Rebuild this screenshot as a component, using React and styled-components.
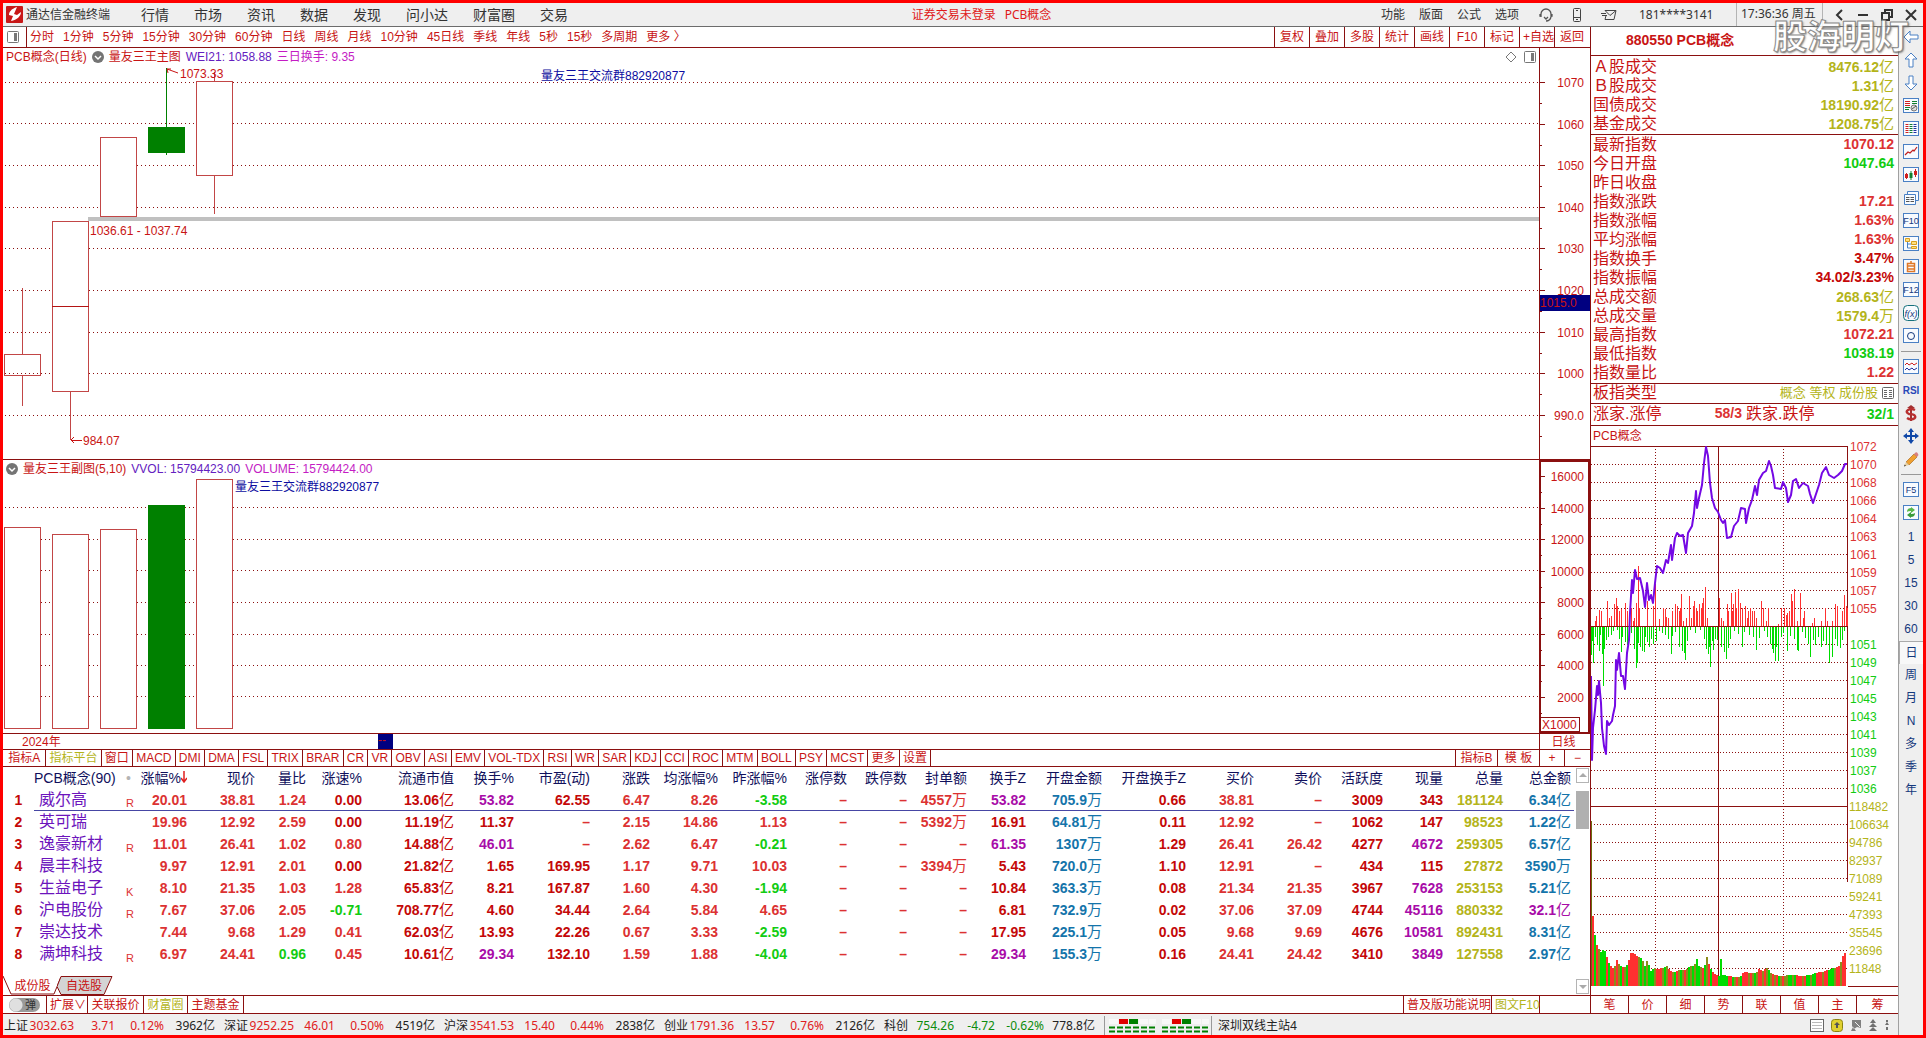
import styled, {createGlobalStyle} from "styled-components";

const line = "#8b1010"
const red = "#c81414"

const colors = {
    r: "#dc3232",
    d: "#c40808",
    g: "#12cc12",
    m: "#a80ca8",
    y: "#b4b41a",
    b: "#1474aa",
}

const GlobalStyle = createGlobalStyle`
  * {
    box-sizing: border-box;
  }

  body {
    margin: 0;
    background: #fff;
    color: ${red};
    font: 12px/16px "Liberation Sans", "Noto Sans CJK SC", sans-serif;
  }

  button {
    margin: 0;
    padding: 0;
    border: 0;
    background: none;
    color: inherit;
    font: inherit;
    white-space: nowrap;
    cursor: pointer;
  }

  svg {
    display: block;
    flex: none;
  }
`

const Frame = styled.div`
  position: relative;
  min-height: 100vh;
  border: 3px solid #f00;
  display: flex;
  flex-direction: column;
`

const TitleBar = styled.header`
  height: 24px;
  padding: 0 6px 0 3px;
  border-bottom: 1px solid #6c6c6c;
  background: #efefef;
  color: #333;
  font-family: "Noto Sans", "Noto Sans CJK SC", sans-serif;
  display: flex;
  align-items: center;
  justify-content: space-between;
`

const Brand = styled.div`
  width: 135px;
  display: flex;
  align-items: center;
  gap: 3px;
`

const Menu = styled.nav`
  display: flex;
  gap: 25px;
  font-size: 14px;
`

const Group = styled.div`
  display: flex;
  align-items: center;
`

const Notice = styled.div`
  padding-left: 14px;
  color: #e01818;
  display: flex;
  gap: 9px;
`

const SmallMenu = styled.nav`
  display: flex;
  gap: 14px;
  margin-right: 20px;
`

const Tools = styled.div`
  display: flex;
  align-items: center;
  gap: 19px;
  margin-right: 22px;
`

const Account = styled.span`
  width: 97px;
`

const Clock = styled.span`
  width: 87px;
  height: 23px;
  line-height: 22px;
  padding-left: 4px;
  border: solid #b4b4b4;
  border-width: 0 1px;
  white-space: nowrap;
`

const WindowButtons = styled.div`
  display: flex;
  align-items: center;
  gap: 12px;
  padding-left: 10px;
`

const Watermark = styled.div`
  position: absolute;
  top: 12px;
  right: 14px;
  font: 700 34px/40px "Noto Sans CJK SC", sans-serif;
  color: #fff;
  opacity: 0.85;
  -webkit-text-stroke: 1px #777;
  text-shadow: 1px 1px 2px #555;
  pointer-events: none;
`

const Body = styled.div`
  flex: 1;
  display: flex;
`

const Workspace = styled.div`
  flex: 1;
  min-width: 0;
  display: flex;
  flex-direction: column;
`

const Columns = styled.div`
  flex: 1;
  display: flex;
`

const Main = styled.main`
  flex: 1;
  min-width: 0;
  border-right: 1px solid ${line};
  display: flex;
  flex-direction: column;
`

const Strip = styled.div`
  height: ${props => props.height}px;
  border-bottom: 1px solid ${line};
  display: flex;
  align-items: stretch;
  justify-content: space-between;
`

const Periods = styled.div`
  display: flex;
  align-items: center;
  gap: 9px;
`

const PanelToggle = styled.button`
  width: 24px;
  height: 20px;
  margin-right: -6px;
  padding-left: 4px;
  border-right: 1px solid ${line};
`

const Tabs = styled.div`
  display: flex;
`

const Actions = styled(Tabs)`
  margin-right: 1px;
`

const IndicatorTabs = styled(Tabs)`
  width: 928px;

  & > * {
    flex-grow: 1;
  }
`

const LinkTabs = styled(Tabs)`
  margin-right: 50px;
  border-left: 1px solid ${line};
`

const Cell = styled.button`
  width: ${props => props.width ? props.width + "px" : "auto"};
  padding: 0 3px;
  border-right: ${props => props.side === "left" ? "0" : `1px solid ${line}`};
  border-left: ${props => props.side === "left" ? `1px solid ${line}` : "0"};
  color: ${props => props.active ? colors.y : "inherit"};
`

const Chart = styled.section`
  display: flex;
  border-bottom: 1px solid ${line};
`

const Canvas = styled.div`
  flex: 1;
  min-width: 0;
`

const Legend = styled.div`
  height: ${props => props.height}px;
  padding: 0 3px;
  display: flex;
  align-items: center;
  gap: 5px;
  white-space: nowrap;
`

const LegendText = styled.span`
  color: ${props => props.color || red};
`

const LegendIcons = styled.div`
  margin-left: auto;
  display: flex;
  gap: 7px;
`

const YearRow = styled(Strip)`
  line-height: 17px;
`

const YearScale = styled.div`
  flex: 1;
  padding-left: 19px;
  display: flex;
`

const Year = styled.span`
  width: 356px;
`

const Cursor = styled.span`
  width: 15px;
  height: 15px;
  background: #000080;
  line-height: 13px;
`

const PeriodName = styled.div`
  width: 51px;
  padding-right: 3px;
  border-left: 1px solid ${line};
  text-align: center;
`

const Quotes = styled.section`
  flex: 1;
  display: flex;
  border-bottom: 1px solid ${line};
`

const QuoteList = styled.div`
  flex: 1;
  min-width: 0;
  display: flex;
  flex-direction: column;
  justify-content: space-between;
`

const Table = styled.table`
  width: 100%;
  table-layout: fixed;
  border-collapse: separate;
  border-spacing: 0;
  font-size: 14px;
  line-height: 20px;
  white-space: nowrap;
`

const Th = styled.th`
  width: ${props => props.width}px;
  height: 22px;
  padding: 0 ${props => props.last ? 3 : 0}px 0 0;
  color: #10105c;
  font-weight: 400;
  text-align: right;
`

const NameTh = styled(Th)`
  padding-right: 24px;
  text-align: center;
`

const DotTh = styled(Th)`
  color: #b4b4b4;
  text-align: left;
`

const Td = styled.td`
  height: 22px;
  padding: 0;
  color: ${props => colors[props.tone]};
  font-weight: 700;
  text-align: right;

  tr:first-child & {
    border-bottom: 1px solid #4646a4;
  }

  &:last-child {
    padding-right: 3px;
  }
`

const RowNumber = styled.td`
  padding: 0;
  color: ${colors.d};
  font-weight: 700;
  text-align: center;
`

const StockName = styled(Td)`
  padding-left: 5px;
  color: #6c14bc;
  font-size: 16px;
  font-weight: 400;
  text-align: left;
`

const Mark = styled(Td)`
  font-size: 11px;
  font-weight: 400;
  line-height: 14px;
  vertical-align: bottom;
  text-align: left;
`

const Unit = styled.span`
  font-size: 15px;
  font-weight: 400;
`

const Sort = styled.svg`
  display: inline-block;
`

const SheetTabs = styled.div`
  display: flex;
  height: 19px;
`

const SheetTab = styled.button`
  position: relative;
  width: 54px;
  height: 19px;
  padding-left: ${props => props.first ? 5 : 0}px;
  line-height: 18px;
`

const TabText = styled.span`
  position: relative;
`

const TabShape = styled.svg`
  position: absolute;
  top: 0;
  left: 0;
`

const ScrollBar = styled.div`
  width: 16px;
  padding: 1px 1px 1px 2px;
  display: flex;
  flex-direction: column;
`

const ScrollButton = styled.button`
  height: 15px;
  border: 1px solid #b4b4b4;
`

const Thumb = styled.div`
  height: 38px;
  margin: 8px 0 auto;
  background: #b0b0b0;
`

const Toggle = styled.label`
  width: 44px;
  padding: 2px 0 0 6px;
  border-right: 1px solid ${line};
`

const ToggleInput = styled.input`
  position: absolute;
  opacity: 0;
`

const ToggleTrack = styled.span`
  display: flex;
  align-items: center;
  justify-content: flex-end;
  width: 31px;
  height: 14px;
  padding-right: 4px;
  border-radius: 7px;
  background: radial-gradient(circle at 7px 7px, #e0e0e0 6px, transparent 7px), #9a9a9a;
  color: #333;
  font-size: 11px;
`

const Aside = styled.aside`
  width: 307px;
  flex: none;
  display: flex;
  flex-direction: column;
`

const AsideTitle = styled.h1`
  height: 29px;
  margin: 0;
  padding-left: 35px;
  border-bottom: 1px solid ${line};
  font-size: 14px;
  line-height: 27px;
`

const Facts = styled.div`
  padding: ${props => props.pad || 0}px 4px 0 2px;
  border-bottom: 1px solid ${line};
`

const Fact = styled.div`
  display: flex;
  align-items: center;
  justify-content: space-between;
  height: ${props => props.height || 19}px;
  padding-bottom: 2px;
  font-size: 16px;
  line-height: 17px;
`

const Value = styled.b`
  color: ${props => colors[props.tone]};
  font-size: 14px;
`

const Tags = styled.span`
  display: flex;
  align-items: center;
  gap: 4px;
  color: ${colors.y};
  font-size: 13px;
`

const Split = styled.span`
  width: 149px;
  margin-right: 4px;
  display: flex;
  justify-content: space-between;
`

const Rest = styled.span`
  flex: 1;
  text-align: right;
`

const AsideCaption = styled.div`
  height: 20px;
  padding-left: 2px;
  line-height: 20px;
`

const DayChartBox = styled.div`
  margin-top: -6px;
`

const AsideTabs = styled.div`
  height: 19px;
  margin-top: auto;
  border: solid ${line};
  border-width: 1px 0;
  display: flex;
`

const AsideTab = styled.button`
  width: 38px;
  border-right: 1px solid ${line};

  &:last-child {
    flex: 1;
    border-right: 0;
  }
`

const StatusBar = styled.footer`
  height: 21px;
  padding: 2px 8px 0 1px;
  background: #efefef;
  color: #222;
  font-family: "Noto Sans", "Noto Sans CJK SC", sans-serif;
  line-height: 19px;
  white-space: nowrap;
  display: flex;
  align-items: center;
`

const Market = styled.div`
  display: grid;
  grid-template-columns: 25px 45px 41px 49px 51px;
  margin-right: 9px;
  text-align: right;
`

const MarketName = styled.span`
  text-align: left;
`

const MarketValue = styled.span`
  color: ${props => props.down ? "#0c8c0c" : "#e02020"};
`

const Divider = styled.div`
  width: 1px;
  height: 19px;
  background: #999;
`

const Blocks = styled.svg`
  margin: 0 2px 0 4px;
`

const Server = styled.div`
  padding-left: 6px;
  border-left: 1px solid #999;
`

const StatusIcons = styled.div`
  margin-left: auto;
  display: flex;
  align-items: center;
  gap: 7px;
`

const Sidebar = styled.nav`
  width: 25px;
  flex: none;
  border-left: 1px solid #a0a0a0;
  background: #efefef;
  color: #14387c;
`

const SideButton = styled.button`
  display: flex;
  justify-content: center;
  width: 24px;
  height: 23px;
  padding-top: ${props => props.text ? 3 : 2}px;
  border: solid #aaa;
  border-width: ${props => props.active ? "1px 0 0 1px" : "0"};
  background: ${props => props.active ? "#f8f8f8" : "none"};
`

const SideLine = styled.div`
  height: 8px;
  padding: 2px 2px 0;

  &::before {
    content: "";
    display: block;
    border-top: 1px solid #999;
  }
`

const menu = ["行情", "市场", "资讯", "数据", "发现", "问小达", "财富圈", "交易"]
const periods = ["分时", "1分钟", "5分钟", "15分钟", "30分钟", "60分钟", "日线", "周线", "月线", "10分钟", "45日线", "季线", "年线", "5秒", "15秒", "多周期", "更多 〉"]
const actions = ["复权", "叠加", "多股", "统计", "画线", "F10", "标记", "+自选", "返回"]
const indicators = ["窗口", "MACD", "DMI", "DMA", "FSL", "TRIX", "BRAR", "CR", "VR", "OBV", "ASI", "EMV", "VOL-TDX", "RSI", "WR", "SAR", "KDJ", "CCI", "ROC", "MTM", "BOLL", "PSY", "MCST", "更多", "设置"]

const columns = [
    ["涨幅%", 50], ["现价", 68], ["量比", 51], ["涨速%", 56], ["流通市值", 92], ["换手%", 60], ["市盈(动)", 76],
    ["涨跌", 60], ["均涨幅%", 68], ["昨涨幅%", 69], ["涨停数", 60], ["跌停数", 60], ["封单额", 60], ["换手Z", 59],
    ["开盘金额", 76], ["开盘换手Z", 84], ["买价", 68], ["卖价", 68], ["活跃度", 61], ["现量", 60], ["总量", 60], ["总金额", 71],
]

// first letter of every value is its tone
const stocks = [
    ["威尔高", "R", "r20.01 r38.81 r1.24 d0.00 d13.06亿 m53.82 d62.55 r6.47 r8.26 g-3.58 r– r– r4557万 m53.82 b705.9万 d0.66 r38.81 r– d3009 d343 y181124 b6.34亿"],
    ["英可瑞", "", "r19.96 r12.92 r2.59 d0.00 d11.19亿 d11.37 r– r2.15 r14.86 r1.13 r– r– r5392万 d16.91 b64.81万 d0.11 r12.92 r– d1062 d147 y98523 b1.22亿"],
    ["逸豪新材", "R", "r11.01 r26.41 r1.02 r0.80 d14.88亿 m46.01 r– r2.62 r6.47 g-0.21 r– r– r– m61.35 b1307万 d1.29 r26.41 r26.42 d4277 m4672 y259305 b6.57亿"],
    ["晨丰科技", "", "r9.97 r12.91 r2.01 d0.00 d21.82亿 d1.65 d169.95 r1.17 r9.71 r10.03 r– r– r3394万 d5.43 b720.0万 d1.10 r12.91 r– d434 d115 y27872 b3590万"],
    ["生益电子", "K", "r8.10 r21.35 r1.03 r1.28 d65.83亿 d8.21 d167.87 r1.60 r4.30 g-1.94 r– r– r– d10.84 b363.3万 d0.08 r21.34 r21.35 d3967 m7628 y253153 b5.21亿"],
    ["沪电股份", "R", "r7.67 r37.06 r2.05 g-0.71 d708.77亿 d4.60 d34.44 r2.64 r5.84 r4.65 r– r– r– d6.81 b732.9万 d0.02 r37.06 r37.09 d4744 m45116 y880332 m32.1亿"],
    ["崇达技术", "", "r7.44 r9.68 r1.29 r0.41 d62.03亿 d13.93 d22.26 r0.67 r3.33 g-2.59 r– r– r– d17.95 b225.1万 d0.05 r9.68 r9.69 d4676 m10581 y892431 b8.31亿"],
    ["满坤科技", "R", "r6.97 r24.41 g0.96 r0.45 d10.61亿 m29.34 d132.10 r1.59 r1.88 g-4.04 r– r– r– m29.34 b155.3万 d0.16 r24.41 r24.42 d3410 m3849 y127558 b2.97亿"],
]

const turnover = [["Ａ股成交", "y8476.12亿"], ["Ｂ股成交", "y1.31亿"], ["国债成交", "y18190.92亿"], ["基金成交", "y1208.75亿"]]

const facts = [
    ["最新指数", "r1070.12"], ["今日开盘", "g1047.64"], ["昨日收盘", "r"], ["指数涨跌", "r17.21"], ["指数涨幅", "r1.63%"],
    ["平均涨幅", "r1.63%"], ["指数换手", "d3.47%"], ["指数振幅", "d34.02/3.23%"], ["总成交额", "y268.63亿"],
    ["总成交量", "y1579.4万"], ["最高指数", "r1072.21"], ["最低指数", "g1038.19"], ["指数量比", "r1.22"],
]

const markets = [
    ["上证", "3032.63", "3.71", "0.12%", "3962亿"],
    ["深证", "9252.25", "46.01", "0.50%", "4519亿"],
    ["沪深", "3541.53", "15.40", "0.44%", "2838亿"],
    ["创业", "1791.36", "13.57", "0.76%", "2126亿"],
    ["科创", "754.26", "-4.72", "-0.62%", "778.8亿"],
]

const Amount = ({children}) => {
    const [, number, unit] = children.match(/^(.*?)([亿万]?)$/)
    return <>{number}{unit && <Unit>{unit}</Unit>}</>
}

const Chevron = () => (
    <svg width="12" height="12" viewBox="0 0 12 12">
        <circle cx="6" cy="6" r="6" fill="#747474"/>
        <path d="M3 5l3 3 3-3" fill="none" stroke="#fff" strokeWidth="1.5"/>
    </svg>
)

const PanelIcon = () => (
    <svg width="12" height="12" viewBox="0 0 12 12">
        <rect x=".5" y=".5" width="11" height="11" rx="1" fill="#fff" stroke="#777"/>
        <path d="M7 2h3v8H7z" fill="#777"/>
    </svg>
)

const Grid = ({levels}) => levels.map(y => (
    <line key={y} x1="2" x2="100%" y1={y + 0.5} y2={y + 0.5} stroke="#8b1010" strokeDasharray="1 3"/>
))

const Candle = ({x, top, height, high, low, down, fill = "#fff"}) => (
    <g stroke={down ? "#008000" : "#c24646"} fill={down ? "#008000" : fill}>
        {high !== undefined && <line x1={x + 18.5} x2={x + 18.5} y1={high} y2={top}/>}
        {low !== undefined && <line x1={x + 18.5} x2={x + 18.5} y1={top + height} y2={low}/>}
        <rect x={x + 0.5} y={top + 0.5} width="36" height={height}/>
    </g>
)

const MainChart = () => (
    <Chart>
        <Canvas>
            <Legend height={18}>
                <LegendText>PCB概念(日线)</LegendText>
                <Chevron/>
                <LegendText>量友三王主图</LegendText>
                <LegendText color="#6420c0">WEI21: 1058.88</LegendText>
                <LegendText color="#c41cc4">三日换手: 9.35</LegendText>
                <LegendIcons>
                    <svg width="12" height="12" viewBox="0 0 12 12">
                        <path d="M6 1l5 5-5 5-5-5z" fill="none" stroke="#777"/>
                    </svg>
                    <PanelIcon/>
                </LegendIcons>
            </Legend>
            <svg width="100%" height="393" shapeRendering="crispEdges">
                <Grid levels={[16, 57, 99, 141, 182, 224, 266, 307, 349]}/>
                <rect x="85" y="151" width="100%" height="4" fill="#c0c0c0"/>
                <Candle x={1} top={288} height={21} high={222} low={340} fill="none"/>
                <Candle x={49} top={155} height={170} low={374}/>
                <rect x="49" y="240" width="37" height="1" fill="#b41414"/>
                <Candle x={97} top={71} height={79}/>
                <Candle x={145} top={61} height={25} high={2} low={89} down/>
                <Candle x={193} top={15} height={94} high={6} low={148}/>
                <g stroke={red} fill="none" shapeRendering="auto">
                    <path d="M164 3l11 4M164 3h4M164 3l1 4M68 374.5h11M68 374l3-3M68 374l3 3"/>
                </g>
                <g fill={red}>
                    <text x="177" y="12">1073.33</text>
                    <text x="87" y="169">1036.61 - 1037.74</text>
                    <text x="80" y="379">984.07</text>
                    <text x="538" y="14" fill="#0c0ca0">量友三王交流群882920877</text>
                </g>
            </svg>
        </Canvas>
        <svg width="51" height="411" shapeRendering="crispEdges">
            <path d="M.5 0v411" stroke={line}/>
            {[1070, 1060, 1050, 1040, 1030, 1020, 1010, 1000, "990.0"].map((label, i) => {
                const y = 34.5 + Math.round(i * 41.6)
                return (
                    <g key={label}>
                        <path d={`M0 ${y}h6M0 ${y + 21}h3`} stroke={line}/>
                        <text x="45" y={y + 4} textAnchor="end" fill={red}>{label}</text>
                    </g>
                )
            })}
            <rect x="1" y="247" width="50" height="16" fill="#000080"/>
            <text x="1" y="259" fill={red}>1015.0</text>
        </svg>
    </Chart>
)

const VolumeChart = () => (
    <Chart>
        <Canvas>
            <Legend height={17}>
                <Chevron/>
                <LegendText>量友三王副图(5,10)</LegendText>
                <LegendText color="#6420c0">VVOL: 15794423.00</LegendText>
                <LegendText color="#c41cc4">VOLUME: 15794424.00</LegendText>
            </Legend>
            <svg width="100%" height="256" shapeRendering="crispEdges">
                <Grid levels={[30, 62, 93, 125, 157, 188, 219]}/>
                <Candle x={1} top={50} height={201}/>
                <Candle x={49} top={57} height={194}/>
                <Candle x={97} top={52} height={199}/>
                <Candle x={145} top={28} height={223} down/>
                <Candle x={193} top={2} height={249}/>
                <text x="232" y="14" fill="#0c0ca0">量友三王交流群882920877</text>
            </svg>
        </Canvas>
        <svg width="51" height="273" shapeRendering="crispEdges">
            <rect x="1" y="1" width="49" height="272" fill="none" stroke={line} strokeWidth="2"/>
            {[16000, 14000, 12000, 10000, 8000, 6000, 4000, 2000].map((label, i) => {
                const y = 16.5 + Math.round(i * 31.5)
                return (
                    <g key={label}>
                        <path d={`M0 ${y}h6M0 ${y + 16}h3`} stroke={line}/>
                        <text x="45" y={y + 4} textAnchor="end" fill={red}>{label}</text>
                    </g>
                )
            })}
            <rect x="1.5" y="257.5" width="39" height="14" fill="#fff" stroke={line}/>
            <text x="3" y="269" fill={red}>X1000</text>
        </svg>
    </Chart>
)

const price = [
    0, 230, 1, 314, 2, 282, 4, 264, 6, 240, 7, 249, 8, 235, 10, 257, 11, 282, 13, 300, 15, 308, 16, 275, 18, 279, 21, 275,
    22, 269, 24, 260, 25, 214, 26, 224, 28, 207, 30, 230, 32, 230, 34, 243, 36, 207, 38, 194, 39, 167, 41, 134, 42, 147,
    44, 124, 46, 133, 49, 132, 52, 145, 54, 161, 56, 137, 58, 154, 60, 149, 62, 157, 64, 137, 66, 120, 69, 122, 72, 127,
    75, 114, 77, 117, 80, 99, 81, 114, 84, 92, 86, 87, 89, 90, 92, 89, 95, 107, 97, 87, 101, 80, 103, 67, 105, 45, 106, 62,
    108, 52, 111, 39, 113, 17, 115, 1, 117, 10, 119, 37, 121, 52, 124, 62, 127, 66, 130, 74, 132, 77, 134, 74, 136, 92,
    140, 91, 143, 80, 147, 75, 150, 62, 154, 63, 155, 77, 158, 62, 161, 54, 164, 40, 166, 49, 168, 34, 172, 27, 175, 25,
    178, 15, 180, 20, 182, 29, 184, 42, 190, 43, 192, 36, 195, 42, 197, 56, 200, 49, 202, 35, 205, 33, 208, 42, 212, 37,
    217, 40, 219, 48, 222, 57, 224, 51, 228, 39, 231, 27, 235, 21, 238, 29, 243, 32, 247, 29, 251, 25, 254, 18, 256, 18,
]

// x, height pairs above and below the zero line
const rises = [
    4, 5, 5, 10, 8, 16, 10, 15, 16, 25, 18, 8, 20, 10, 23, 22, 25, 28, 26, 20, 28, 15, 30, 17, 34, 23, 36, 15, 40, 18, 42, 5,
    43, 8, 45, 23, 47, 60, 48, 18, 56, 25, 62, 20, 64, 42, 68, 7, 72, 18, 74, 17, 75, 9, 77, 8, 81, 15, 84, 22, 86, 20, 88, 15,
    89, 18, 90, 32, 92, 5, 95, 8, 98, 30, 100, 8, 102, 20, 103, 25, 105, 18, 106, 15, 108, 22, 110, 18, 111, 23, 112, 28,
    114, 39, 116, 8, 128, 28, 130, 8, 132, 5, 136, 22, 137, 15, 140, 33, 141, 15, 142, 22, 144, 34, 145, 18, 147, 37, 149, 23,
    151, 18, 154, 20, 156, 8, 157, 15, 159, 18, 161, 15, 163, 15, 165, 8, 170, 25, 172, 18, 175, 5, 177, 18, 187, 2, 190, 18,
    193, 18, 195, 11, 196, 13, 198, 15, 200, 32, 201, 25, 203, 37, 206, 5, 209, 33, 212, 8, 213, 15, 221, 3, 223, 8, 230, 5,
    234, 18, 236, 5, 241, 5, 244, 22, 246, 20, 251, 15, 253, 31, 255, 20, 256, 18,
]
const falls = [
    0, 28, 1, 14, 2, 36, 4, 10, 6, 18, 8, 24, 9, 8, 11, 27, 12, 59, 13, 22, 15, 13, 17, 10, 20, 8, 22, 4, 26, 3, 28, 12, 30, 25,
    31, 10, 34, 15, 36, 18, 40, 6, 43, 22, 45, 41, 46, 36, 47, 16, 49, 20, 51, 24, 53, 25, 54, 10, 56, 15, 58, 20, 60, 12,
    62, 17, 65, 14, 68, 4, 71, 6, 74, 8, 77, 12, 80, 27, 81, 9, 84, 5, 88, 20, 91, 24, 93, 26, 94, 33, 96, 14, 99, 3, 104, 6,
    109, 3, 113, 12, 115, 22, 117, 27, 118, 20, 119, 40, 121, 14, 122, 23, 124, 12, 126, 13, 130, 20, 133, 25, 135, 32,
    137, 21, 139, 12, 143, 4, 147, 7, 151, 20, 153, 5, 158, 8, 162, 10, 165, 23, 168, 11, 173, 4, 176, 10, 179, 17, 181, 22,
    182, 26, 184, 34, 185, 20, 187, 34, 190, 10, 192, 6, 196, 24, 199, 9, 203, 12, 206, 23, 207, 24, 211, 5, 214, 11, 217, 17,
    219, 30, 222, 13, 224, 18, 227, 10, 230, 20, 232, 14, 235, 18, 238, 36, 241, 30, 244, 12, 246, 19, 249, 21, 251, 13, 253, 4,
]
const volume = [
    1, 70, 2, 60, 4, 42, 6, 40, 8, 34, 10, 34, 12, 38, 14, 32, 16, 25, 19, 20, 22, 17, 25, 26, 28, 20, 32, 18, 36, 22, 39, 33,
    42, 33, 45, 30, 50, 27, 53, 20, 56, 28, 58, 14, 62, 18, 66, 17, 70, 18, 75, 20, 78, 15, 82, 13, 88, 16, 94, 16, 98, 20,
    101, 20, 103, 22, 104, 33, 106, 20, 112, 17, 115, 29, 118, 18, 122, 13, 126, 10, 128, 10, 129, 27, 131, 11, 142, 9, 148, 9,
    152, 14, 158, 13, 164, 13, 167, 17, 172, 15, 174, 19, 180, 12, 188, 10, 202, 11, 210, 10, 218, 11, 224, 13, 230, 14,
    236, 16, 242, 18, 247, 20, 250, 26, 252, 33, 255, 33,
]
const volumeTones = "rgrogggrgrrorogrogrrrrrogogogggorrrogorrogrogorogogoggorgorgrrrgggggrrgorogrrrorogorrorogororgorooggogrrrorggoggrrrorrgggorrorr"
const volumeColors = {r: "#ff3030", g: "#00dc00", o: "#8c8c1c"}

const pairs = list => Array.from({length: list.length / 2}, (_, i) => [list[i * 2], list[i * 2 + 1]])

const volumeAt = x => {
    const points = pairs(volume)
    const next = points.findIndex(point => point[0] >= x)
    if (next < 1) return points[0][1]
    const [x1, y1] = points[next - 1]
    const [x2, y2] = points[next]
    return Math.round(y1 + (y2 - y1) * (x - x1) / (x2 - x1))
}

const scale = [
    1072, 1070, 1068, 1066, 1064, 1063, 1061, 1059, 1057, 1055, "", 1051, 1049, 1047, 1045, 1043, 1041, 1039, 1037, 1036,
    118482, 106634, 94786, 82937, 71089, 59241, 47393, 35545, 23696, 11848,
]

const scaleColor = i => i < 10 ? colors.r : i < 20 ? colors.g : colors.y

const DayChart = () => (
    <svg width="307" height="549" shapeRendering="crispEdges">
        {scale.map((label, i) => {
            const y = 6.5 + i * 18
            return (
                <g key={i}>
                    <path d={`M0 ${y}h256`} stroke={line} strokeDasharray={i % 10 ? "1 2" : "none"}/>
                    <text x={i < 20 ? 259 : 258} y={y + 4} fill={scaleColor(i)}>{label}</text>
                </g>
            )
        })}
        <path d="M64.5 6v540M192.5 6v540" stroke={line} strokeDasharray="1 2"/>
        <path d="M256.5 6v436M257 546.5h50" stroke={line}/>
        {pairs(rises).map(([x, h]) => <rect key={x} x={x} y={186 - h} width="1" height={h} fill="#ff3030"/>)}
        {pairs(falls).map(([x, h]) => <rect key={x} x={x} y="187" width="1" height={h} fill="#00dc00"/>)}
        {volumeTones.split("").map((tone, i) => {
            const h = volumeAt(i * 2 + 1)
            return <rect key={i} x={i * 2 + 1} y={546 - h} width="2" height={h} fill={volumeColors[tone]}/>
        })}
        <rect x="0" y="381" width="1" height="165" fill="#6c6c10"/>
        <path d="M127.5 6v530" stroke={line}/>
        <polyline points={pairs(price).map(([x, y]) => `${x},${y + 6}`).join(" ")} fill="none" stroke="#7408e4"
                  strokeWidth="2" strokeLinejoin="round" shapeRendering="auto"/>
    </svg>
)

const Box = ({children}) => (
    <svg width="16" height="16" viewBox="0 0 16 16">
        <rect x=".5" y=".5" width="15" height="14" fill="#f8fbff" stroke="#4a80c4"/>
        {children}
    </svg>
)

const BoxText = ({children}) => (
    <Box><text x="8" y="11" fontSize="9" textAnchor="middle" fill="#14387c">{children}</text></Box>
)

const Arrow = ({angle}) => (
    <svg width="16" height="16" viewBox="0 0 16 16">
        <path d="M1 8l6-6v4h8v4H7v4z" transform={`rotate(${angle} 8 8)`} fill="#fff" stroke="#4a80c4" strokeLinejoin="round"/>
    </svg>
)

const sideTools = [
    ["后退", <Arrow angle={0}/>],
    ["上移", <Arrow angle={90}/>],
    ["下移", <Arrow angle={270}/>],
    ["报价", <Box>
        <path d="M2 3.500h5M2 5.500h5M2 7.500h5" stroke="#d02020"/>
        <path d="M9 3.500h5M9 5.500h5M2 9.500h5M2 11.500h4" stroke="#108030"/>
        <circle cx="11" cy="10" r="3" fill="#ddd" stroke="#777"/>
        <path d="M9 11l4-3" stroke="#555"/>
    </Box>],
    ["列表", <Box>
        <path d="M4 3v10" stroke="#d02020" strokeWidth="3" strokeDasharray="1 1"/>
        <path d="M8 3v10" stroke="#108030" strokeWidth="3" strokeDasharray="1 1"/>
        <path d="M12 3v10" stroke="#2030a0" strokeWidth="3" strokeDasharray="1 1"/>
    </Box>],
    ["走势", <Box><path d="M2 11l3-3 2 1 3-3 1 1 3-4" fill="none" stroke="#c02020" strokeWidth="1.2"/></Box>],
    ["K线", <Box>
        <path d="M3.500 6v6M12.500 2v8" stroke="#d02020"/>
        <path d="M2 7h3v4H2zM11 4h3v4h-3z" fill="#d02020"/>
        <path d="M8 4v9" stroke="#108030"/>
        <path d="M6.500 6h3v5h-3z" fill="#108030"/>
    </Box>],
    ["窗口", <svg width="16" height="16" viewBox="0 0 16 16">
        <path d="M4.500 4V1.500h11v9H13M1.500 4.500h11v10h-11z" fill="#f8fbff" stroke="#4a80c4"/>
        <path d="M3 7.500h8M3 9.500h8M3 11.500h8" stroke="#555" strokeDasharray="3.500 1"/>
    </svg>],
    ["基本资料", <BoxText>F10</BoxText>],
    ["板块树", <Box>
        <path d="M4.500 6v6h4M4.500 8h4" fill="none" stroke="#4a80c4"/>
        <path d="M2.500 2.500h4v3h-4zM8.500 5.500h5v3h-5zM8.500 10.500h5v2h-5z" fill="#ffe080" stroke="#d8a020"/>
    </Box>],
    ["自选", <Box>
        <path d="M4.500 4.500h7v8h-7zM4.500 7h7M4.500 10h7M8 2v2" fill="none" stroke="#e07828" strokeWidth="1.500"/>
    </Box>],
    ["资金", <BoxText>F12</BoxText>],
    ["公式", <svg width="16" height="16" viewBox="0 0 16 16">
        <rect x=".5" y=".5" width="15" height="15" rx="4" fill="#f8fbff" stroke="#14707c"/>
        <text x="8" y="12" fontSize="9" fontStyle="italic" textAnchor="middle" fill="#14387c">f(x)</text>
    </svg>],
    ["周期", <Box><circle cx="8" cy="8" r="3.500" fill="none" stroke="#14387c"/></Box>],
    null,
    ["对比", <Box>
        <path d="M2 6l2-2 2 2 3-2 2 2 3-2" fill="none" stroke="#d02020"/>
        <path d="M2 11l2-2 2 2 3-2 2 2 3-2" fill="none" stroke="#2030a0"/>
    </Box>],
    ["指标", <svg width="20" height="16" viewBox="0 0 20 16">
        <text x="10" y="12" fontSize="10" fontWeight="700" textAnchor="middle" fill="#2848b8">RSI</text>
    </svg>],
    ["委托", <svg width="16" height="16" viewBox="0 0 16 16">
        <path d="M8 0l4 3H4zM7 2h2v14H7z" fill="#a03030"/>
        <path d="M12 5Q8 3 5 5t1 4q5 0 6 2t-2 3-6-1" fill="none" stroke="#b83030" strokeWidth="2.400"/>
    </svg>],
    ["移动", <svg width="16" height="16" viewBox="0 0 16 16">
        <path d="M8 0l3 4H9v3h3V5l4 3-4 3V9H9v3h2l-3 4-3-4h2V9H4v2L0 8l4-3v2h3V4H5z" fill="#1048a8"/>
    </svg>],
    ["画笔", <svg width="16" height="16" viewBox="0 0 16 16">
        <path d="M3 11l8-8 3 3-8 8z" fill="#f0a030" stroke="#a06010" strokeWidth=".6"/>
        <path d="M11 3l1.500-1.500q1.500-.5 2 .5t1 2L14 6z" fill="#d88080"/>
        <path d="M3 11l3 3-5 1.500z" fill="#e8d0a0"/>
        <path d="M1 15.500l2-.7-1.300-1.300z" fill="#333"/>
    </svg>],
    null,
    ["分时", <BoxText>F5</BoxText>],
    ["刷新", <Box>
        <path d="M4 7q0-4 4-4V2l4 3-4 3V6q-3 0-4 1z" fill="#58b848"/>
        <path d="M12 8q0 4-4 4v1l-4-3 4-3v2q3 0 4-1z" fill="#3c9c3c"/>
    </Box>],
]

const sidePeriods = ["1", "5", "15", "30", "60", "日", "周", "月", "N", "多", "季", "年"]

const Header = () => (
    <TitleBar>
        <Group>
            <Brand>
                <svg width="17" height="17" viewBox="0 0 17 17">
                    <rect width="17" height="17" rx="1" fill="#c81818"/>
                    <path d="M11 1C5 3 3 6 3 9l4 1-2 5c6-1 10-5 10-9l-4 3-3-1z" fill="#fff"/>
                </svg>
                通达信金融终端
            </Brand>
            <Menu>{menu.map(item => <button key={item}>{item}</button>)}</Menu>
        </Group>
        <Notice><span>证券交易未登录</span><span>PCB概念</span></Notice>
        <Group>
            <SmallMenu>{["功能", "版面", "公式", "选项"].map(item => <button key={item}>{item}</button>)}</SmallMenu>
            <Tools>
                <svg width="14" height="14" viewBox="0 0 14 14" fill="none" stroke="#555" strokeWidth="1.3">
                    <path d="M2 9V6a5 5 0 0 1 10 0v3M1 6v2h1M13 6v2h-1M12 9q-1 4-5 4M5 9l2 2 2-2"/>
                </svg>
                <svg width="10" height="14" viewBox="0 0 10 14" fill="none" stroke="#444">
                    <rect x="1.5" y=".5" width="7" height="13" rx="1"/>
                    <path d="M1.500 9.500h7M4 11.500h2M4 2.500h2"/>
                </svg>
                <svg width="16" height="12" viewBox="0 0 16 12" fill="none" stroke="#444">
                    <path d="M4 1.500h11l-2 9H4l1-4M4 1.500l5 5 6-5M0 4.500h5M1 6.500h5"/>
                </svg>
            </Tools>
            <Account>181****3141</Account>
            <Clock>17:36:36 周五</Clock>
            <WindowButtons>
                <button aria-label="返回">
                    <svg width="12" height="12" fill="none" stroke="#333" strokeWidth="2"><path d="M9 1L4 6l5 5"/></svg>
                </button>
                <button aria-label="最小化">
                    <svg width="12" height="12" stroke="#333" strokeWidth="2"><path d="M1 6h10"/></svg>
                </button>
                <button aria-label="还原">
                    <svg width="12" height="12" fill="none" stroke="#333" strokeWidth="2">
                        <path d="M4 4V1h7v7H8M1 4h7v7H1z"/>
                    </svg>
                </button>
                <button aria-label="关闭">
                    <svg width="12" height="12" stroke="#333" strokeWidth="2"><path d="M1 1l10 10M11 1L1 11"/></svg>
                </button>
            </WindowButtons>
        </Group>
    </TitleBar>
)

const SortArrow = () => (
    <Sort width="6" height="12" viewBox="0 0 6 12">
        <path d="M3 0v11M0 7l3 4 3-4" fill="none" stroke="#e02020" strokeWidth="1.5"/>
    </Sort>
)

const QuoteTable = () => (
    <Table>
        <thead>
        <tr>
            <Th width={31}/>
            <NameTh width={92}>PCB概念(90)</NameTh>
            <DotTh width={11}>•</DotTh>
            {columns.map(([name, width], i) => (
                <Th key={name} width={width} last={i === columns.length - 1 ? 1 : undefined}>
                    {name}
                    {i === 0 && <SortArrow/>}
                </Th>
            ))}
        </tr>
        </thead>
        <tbody>
        {stocks.map(([name, mark, values], i) => (
            <tr key={name}>
                <RowNumber>{i + 1}</RowNumber>
                <StockName>{name}</StockName>
                <Mark tone="r">{mark}</Mark>
                {values.split(" ").map((value, j) => (
                    <Td key={j} tone={value[0]}><Amount>{value.slice(1)}</Amount></Td>
                ))}
            </tr>
        ))}
        </tbody>
    </Table>
)

const Heat = ({hot}) => (
    <Blocks width="47" height="15">
        {[0, 1, 2, 3, 4].map(i => (
            <rect key={i} x={i * 10} y="1" width="9" height="5"
                  fill={i === hot ? "#e00000" : i === hot + 1 ? "#008000" : "#f8f8f8"}/>
        ))}
        <path d="M0 9.500h47M0 13.500h47" stroke="#008000" strokeWidth="2" strokeDasharray="6 2"/>
    </Blocks>
)

const FactRows = ({rows}) => rows.map(([name, value]) => (
    <Fact key={name}>
        {name}<Value tone={value[0]}><Amount>{value.slice(1)}</Amount></Value>
    </Fact>
))

const MainPanel = () => (
    <Main>
        <Strip height={21}>
            <Periods>
                <PanelToggle aria-label="侧栏"><PanelIcon/></PanelToggle>
                {periods.map(item => <button key={item}>{item}</button>)}
            </Periods>
            <Actions>
                {actions.map(item => <Cell key={item} width={35} side="left">{item}</Cell>)}
            </Actions>
        </Strip>
        <MainChart/>
        <VolumeChart/>
        <YearRow height={16}>
            <YearScale>
                <Year>2024年</Year>
                <Cursor>--</Cursor>
            </YearScale>
            <PeriodName>日线</PeriodName>
        </YearRow>
        <Strip height={17}>
            <IndicatorTabs>
                <Cell width={43}>指标A</Cell>
                <Cell active={1}>指标平台</Cell>
                {indicators.map(item => <Cell key={item}>{item}</Cell>)}
            </IndicatorTabs>
            <Tabs>
                <Cell side="left" width={42}>指标B</Cell>
                <Cell side="left" width={42}>模 板</Cell>
                <Cell side="left" width={25}>+</Cell>
                <Cell side="left" width={26}>−</Cell>
            </Tabs>
        </Strip>
        <Quotes>
            <QuoteList>
                <QuoteTable/>
                <SheetTabs>
                    <SheetTab first={1}>
                        <TabShape width="60" height="19">
                            <path d="M0 0l8 18h43l7-17" fill="#fff" stroke={line}/>
                        </TabShape>
                        <TabText>成份股</TabText>
                    </SheetTab>
                    <SheetTab>
                        <TabShape width="56" height="19">
                            <path d="M4 .5h51l-8 18H4l-4-8z" fill="#d4d4d4" stroke={line}/>
                        </TabShape>
                        <TabText>自选股</TabText>
                    </SheetTab>
                </SheetTabs>
            </QuoteList>
            <ScrollBar>
                <ScrollButton aria-label="向上">
                    <svg width="11" height="13"><path d="M2 8l4-4 4 4z" fill="#aaa"/></svg>
                </ScrollButton>
                <Thumb/>
                <ScrollButton aria-label="向下">
                    <svg width="11" height="13"><path d="M2 5l4 4 4-4z" fill="#aaa"/></svg>
                </ScrollButton>
            </ScrollBar>
        </Quotes>
        <Strip height={18}>
            <Tabs>
                <Toggle>
                    <ToggleInput type="checkbox"/>
                    <ToggleTrack>弹</ToggleTrack>
                </Toggle>
                <Cell width={41}>扩展∨</Cell>
                <Cell width={56}>关联报价</Cell>
                <Cell width={44} active={1}>财富圈</Cell>
                <Cell width={56}>主题基金</Cell>
            </Tabs>
            <LinkTabs>
                <Cell width={88}>普及版功能说明</Cell>
                <Cell width={48} active={1}>图文F10</Cell>
            </LinkTabs>
        </Strip>
    </Main>
)

const InfoPanel = () => (
    <Aside>
        <AsideTitle>880550 PCB概念</AsideTitle>
        <Facts pad={2}><FactRows rows={turnover}/></Facts>
        <Facts pad={1}><FactRows rows={facts}/></Facts>
        <Facts>
            <Fact>
                板指类型
                <Tags>
                    概念 等权 成份股
                    <svg width="12" height="12" viewBox="0 0 12 12">
                        <rect x=".5" y=".5" width="11" height="11" rx="1" fill="#fff" stroke="#666"/>
                        <path d="M2 3.500h8M2 5.500h8M2 7.500h8M2 9.500h8" stroke="#666" strokeDasharray="3 2"/>
                    </svg>
                </Tags>
            </Fact>
        </Facts>
        <Facts>
            <Fact height={21}>
                <Split>涨家.涨停<Value tone="r">58/3</Value></Split>
                <span>跌家.跌停</span>
                <Rest><Value tone="g">32/1</Value></Rest>
            </Fact>
        </Facts>
        <AsideCaption>PCB概念</AsideCaption>
        <DayChartBox><DayChart/></DayChartBox>
        <AsideTabs>
            {["笔", "价", "细", "势", "联", "值", "主", "筹"].map(item => (
                <AsideTab key={item}>{item}</AsideTab>
            ))}
        </AsideTabs>
    </Aside>
)

const Status = () => (
    <StatusBar>
        {markets.map(([name, index, change, percent, amount]) => {
            const down = change[0] === "-" ? 1 : undefined
            return (
                <Market key={name}>
                    <MarketName>{name}</MarketName>
                    <MarketValue down={down}>{index}</MarketValue>
                    <MarketValue down={down}>{change}</MarketValue>
                    <MarketValue down={down}>{percent}</MarketValue>
                    <span>{amount}</span>
                </Market>
            )
        })}
        <Divider/>
        <Heat hot={1}/>
        <Heat hot={1}/>
        <Server>深圳双线主站4</Server>
        <StatusIcons>
            <svg width="14" height="13" viewBox="0 0 14 13">
                <rect x=".5" y=".5" width="13" height="12" fill="#fff" stroke="#666"/>
                <path d="M2 3.500h10M2 6.500h10M2 9.500h10" stroke="#bbb"/>
            </svg>
            <svg width="12" height="13" viewBox="0 0 12 13">
                <rect x=".5" y=".5" width="11" height="12" rx="3" fill="#e0d030" stroke="#8c8410"/>
                <path d="M6 3l3 3H7v3H5V6H3z" fill="#555"/>
            </svg>
            <svg width="12" height="13" viewBox="0 0 12 13">
                <path d="M2 1h9v8L7 8l-3 2-2-3zM3 8l-2 4h5l-2-3" fill="#808080"/>
                <path d="M5 3l5 5" stroke="#eee"/>
            </svg>
            <svg width="8" height="13" viewBox="0 0 8 13">
                <path d="M4 0l3 4H1zM4 4l4 4H0zM4 8l4 4H0z" fill="#707070"/>
            </svg>
            <svg width="6" height="13" viewBox="0 0 6 13">
                <path d="M2 1h2v2H2zM3 3l2 3H1zM2 8h2v3H2z" fill="#707070"/>
            </svg>
        </StatusIcons>
    </StatusBar>
)

const App = () => {
    return (
        <Frame>
            <GlobalStyle/>
            <Header/>
            <Body>
                <Workspace>
                    <Columns>
                        <MainPanel/>
                        <InfoPanel/>
                    </Columns>
                    <Status/>
                </Workspace>
                <Sidebar>
                    {sideTools.map((tool, i) => tool
                        ? <SideButton key={i} aria-label={tool[0]}>{tool[1]}</SideButton>
                        : <SideLine key={i}/>
                    )}
                    {sidePeriods.map(item => (
                        <SideButton key={item} text={1} active={item === "日" ? 1 : undefined}>{item}</SideButton>
                    ))}
                </Sidebar>
            </Body>
            <Watermark>股海明灯</Watermark>
        </Frame>
    )
}

export default App
